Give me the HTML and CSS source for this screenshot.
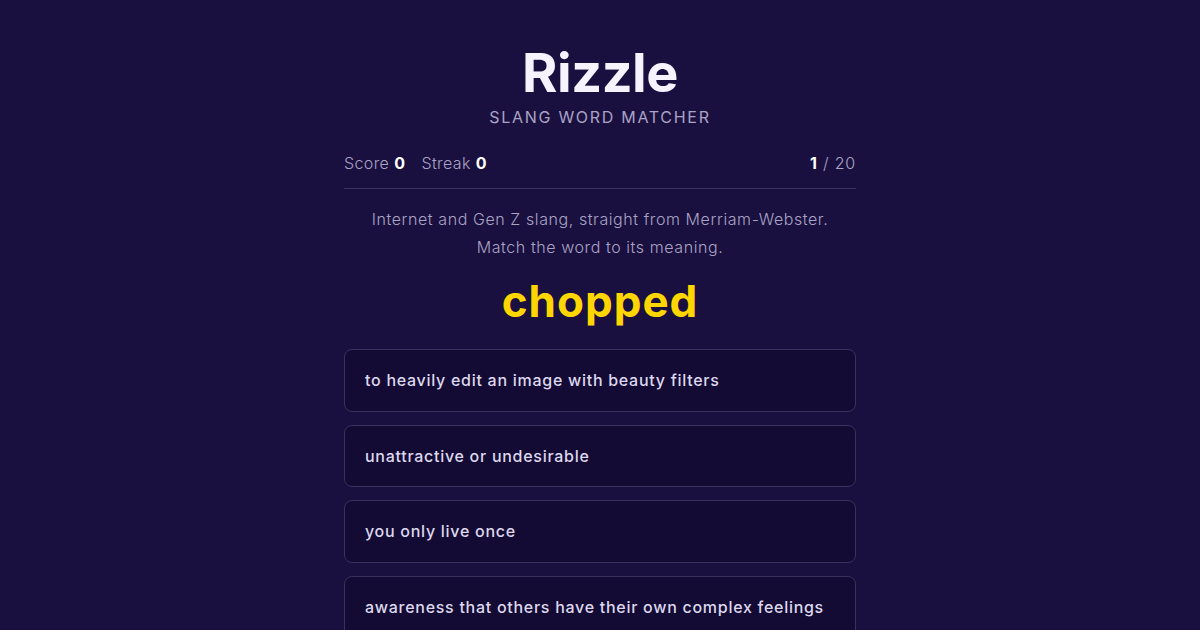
FILE: index.html
```html
<!DOCTYPE html>
<html lang="en">
<head>
<meta charset="utf-8">
<title>Rizzle</title>
<link rel="stylesheet" href="styles.css">
</head>
<body>
<main class="app">
  <header class="header">
    <h1 class="title">Rizzle</h1>
    <p class="subtitle">SLANG WORD MATCHER</p>
  </header>
  <div class="stats">
    <div class="stats-left">
      <span class="stat">Score <b>0</b></span>
      <span class="stat">Streak <b>0</b></span>
    </div>
    <div class="stats-right"><b>1</b> / 20</div>
  </div>
  <p class="intro">Internet and Gen Z slang, straight from Merriam-Webster.<br>Match the word to its meaning.</p>
  <div class="word">chopped</div>
  <div class="options">
    <button class="option">to heavily edit an image with beauty filters</button>
    <button class="option">unattractive or undesirable</button>
    <button class="option">you only live once</button>
    <button class="option">awareness that others have their own complex feelings</button>
  </div>
</main>
</body>
</html>
```

FILE: styles.css
```css
* { box-sizing: border-box; }
html, body {
  margin: 0;
  padding: 0;
  background: #1a1040;
}
body {
  font-family: Inter, "Noto Sans", sans-serif;
  color: #f4f0ff;
  height: 630px;
  overflow: hidden;
}
.app {
  width: 512px;
  margin: 0 auto;
  padding-top: 42px;
}
.header { text-align: center; }
.title {
  margin: 0;
  font-size: 54px;
  line-height: 62px;
  font-weight: 700;
  letter-spacing: -0.5px;
  color: #f6f3ff;
}
.subtitle {
  margin: 2px 0 0;
  font-size: 16px;
  line-height: 22px;
  letter-spacing: 1.7px;
  color: #a9a3c4;
  font-weight: 400;
}
.stats {
  display: flex;
  justify-content: space-between;
  align-items: center;
  margin-top: 23px;
  padding-bottom: 13px;
  border-bottom: 1px solid #3a315e;
  font-size: 16px;
  line-height: 24px;
  letter-spacing: 0.4px;
  color: #a9a3c4;
  font-weight: 300;
}
.stats-left { display: flex; gap: 16px; }
.stats-right { letter-spacing: 0.8px; }
.stats b { color: #ffffff; font-weight: 700; }
.intro {
  margin: 16px 0 0;
  text-align: center;
  font-size: 16px;
  line-height: 28px;
  letter-spacing: 0.58px;
  color: #a9a3c4;
  font-weight: 300;
}
.word {
  text-align: center;
  font-size: 44px;
  line-height: 54px;
  font-weight: 700;
  letter-spacing: 1px;
  color: #ffd600;
  margin-top: 13px;
}
.options {
  display: flex;
  flex-direction: column;
  gap: 13px;
  margin-top: 21px;
}
.option {
  display: block;
  width: 100%;
  height: 62.5px;
  text-align: left;
  padding: 0 20px;
  background: #130b33;
  border: 1px solid #3a315e;
  border-radius: 8px;
  color: #ddd8ee;
  font-family: Inter, "Noto Sans", sans-serif;
  font-size: 16px;
  font-weight: 500;
  letter-spacing: 0.72px;
  cursor: pointer;
}
```
